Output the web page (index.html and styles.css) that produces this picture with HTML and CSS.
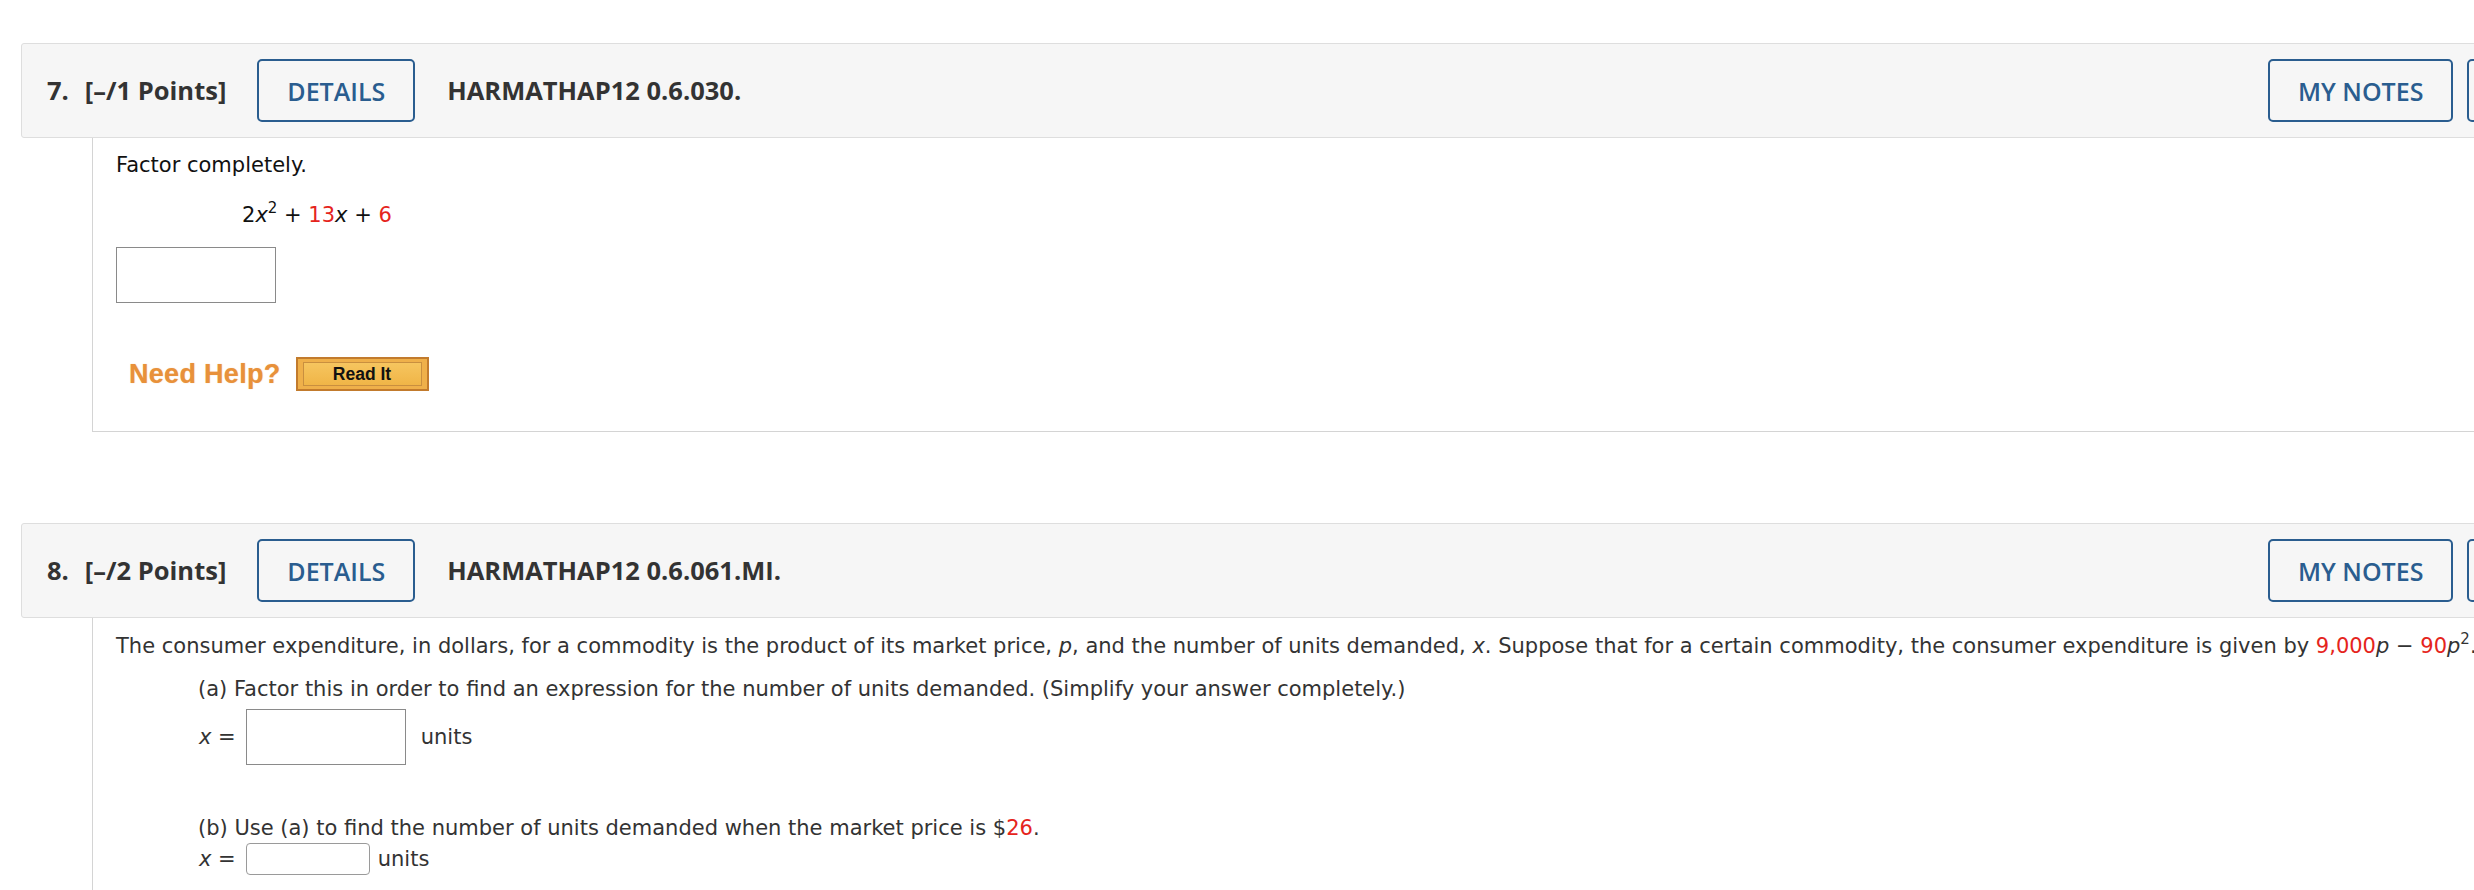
FILE: index.html
```html
<!DOCTYPE html>
<html lang="en">
<head>
<meta charset="utf-8">
<title>WebAssign</title>
<link rel="stylesheet" href="styles.css">
</head>
<body>
<div class="page">
  <section class="question">
    <div class="q-header">
      <div class="q-lead">
        <span class="q-num">7.</span>
        <span class="q-points">[–/1 Points]</span>
        <button class="btn btn-details">DETAILS</button>
        <span class="q-title">HARMATHAP12 0.6.030.</span>
      </div>
      <div class="actions">
        <button class="btn">MY NOTES</button>
        <button class="btn">ASK YOUR TEACHER</button>
        <button class="btn">PRACTICE ANOTHER</button>
      </div>
    </div>
    <div class="q-body q-body-first">
      <div class="prompt prompt-dark">Factor completely.</div>
      <div class="math">2<i>x</i><sup>2</sup> + <span class="red">13</span><i>x</i> + <span class="red">6</span></div>
      <input class="answer answer-big" type="text" aria-label="answer">
      <div class="help">
        <span class="help-label">Need Help?</span>
        <button class="read-it"><span class="read-it-inner">Read It</span></button>
      </div>
    </div>
  </section>

  <section class="question">
    <div class="q-header">
      <div class="q-lead">
        <span class="q-num">8.</span>
        <span class="q-points">[–/2 Points]</span>
        <button class="btn btn-details">DETAILS</button>
        <span class="q-title">HARMATHAP12 0.6.061.MI.</span>
      </div>
      <div class="actions">
        <button class="btn">MY NOTES</button>
        <button class="btn">ASK YOUR TEACHER</button>
        <button class="btn">PRACTICE ANOTHER</button>
      </div>
    </div>
    <div class="q-body q-body-second">
      <div class="prompt">The consumer expenditure, in dollars, for a commodity is the product of its market price, <i>p</i>, and the number of units demanded, <i>x</i>. Suppose that for a certain commodity, the consumer expenditure is given by <span class="red">9,000</span><i>p</i> &minus; <span class="red">90</span><i>p</i><sup>2</sup>.</div>
      <div class="part part-a">(a) Factor this in order to find an expression for the number of units demanded. (Simplify your answer completely.)</div>
      <div class="row row-a">
        <span class="var"><i>x</i> =</span>
        <input class="answer answer-big" type="text" aria-label="x">
        <span class="unit unit-a">units</span>
      </div>
      <div class="part part-b">(b) Use (a) to find the number of units demanded when the market price is $<span class="red">26</span>.</div>
      <div class="row row-b">
        <span class="var"><i>x</i> =</span>
        <input class="answer answer-small" type="text" aria-label="x">
        <span class="unit unit-b">units</span>
      </div>
      <div class="help help-second">
        <span class="help-label">Need Help?</span>
        <button class="read-it"><span class="read-it-inner">Read It</span></button>
      </div>
    </div>
  </section>
</div>
</body>
</html>
```
FILE: styles.css
```css
html, body {
  margin: 0;
  padding: 0;
  overflow: hidden;
  background: #ffffff;
}

body {
  font-family: "DejaVu Sans", Verdana, sans-serif;
  font-size: 21px;
  line-height: 24px;
  color: #333333;
}

.page {
  width: 3400px;
  padding: 43px 0 0 21px;
}

.question + .question {
  margin-top: 91px;
}

/* Header bar */
.q-header {
  display: flex;
  align-items: center;
  height: 93px;
  padding: 0 25px;
  background: #f6f6f6;
  border: 1px solid #dedede;
  border-radius: 3px;
  font-family: "Open Sans", "Liberation Sans", sans-serif;
  color: #333333;
}

.q-lead {
  flex: none;
  width: 2221px;
  display: flex;
  align-items: center;
}

.q-num,
.q-points,
.q-title {
  font-size: 25.5px;
  font-weight: 700;
  line-height: 1;
}

.q-num {
  margin-right: 16px;
}

.btn {
  font-family: "Open Sans", "Liberation Sans", sans-serif;
  font-size: 25px;
  font-weight: 600;
  color: #2a5d8f;
  background: transparent;
  border: 2px solid #2a5d8f;
  border-radius: 5px;
  height: 63px;
  padding: 0 28px;
  cursor: pointer;
  flex: none;
}

.btn-details {
  margin-left: 31px;
}

.q-title {
  margin-left: 32px;
}

.actions {
  display: flex;
  gap: 14px;
  flex: none;
}

/* Question body */
.q-body {
  margin-left: 71px;
  border-left: 1px solid #d4d4d4;
  border-bottom: 1px solid #d4d4d4;
  padding: 15px 0 40px 23px;
}

.q-body-second {
  padding-top: 16px;
  padding-bottom: 60px;
}

.prompt {
  white-space: nowrap;
}

.prompt-dark,
.math {
  color: #111111;
}

.prompt i,
.math i,
.var i {
  font-style: italic;
}

.red {
  color: #e5241c;
}

sup {
  font-size: 15px;
  line-height: 0;
  vertical-align: 9px;
}

.math {
  margin-top: 26px;
  padding-left: 126px;
}

.answer {
  box-sizing: border-box;
  margin: 0;
  background: #ffffff;
  font-family: inherit;
  font-size: 20px;
}

.answer-big {
  display: block;
  width: 160px;
  height: 56px;
  border: 1px solid #8a8a8a;
  border-radius: 0;
}

.q-body-first .answer-big {
  margin-top: 20px;
}

.answer-small {
  display: block;
  width: 124px;
  height: 32px;
  border: 1px solid #9a9a9a;
  border-radius: 4px;
}

/* Need help row */
.help {
  display: flex;
  align-items: center;
  margin-top: 54px;
  padding-left: 13px;
  gap: 15px;
}

.help-second {
  margin-top: 40px;
}

.help-label {
  font-family: "Liberation Sans", Arial, sans-serif;
  font-weight: 700;
  font-size: 27px;
  line-height: 30px;
  letter-spacing: 0.3px;
  color: #e8913a;
  text-shadow: 0 0 1px rgba(232, 145, 58, 0.6);
}

.read-it {
  box-sizing: border-box;
  width: 133px;
  height: 34px;
  margin: 0;
  padding: 3px 5px;
  background: #efb04a;
  border: 2px solid #c27b2d;
  cursor: pointer;
  flex: none;
}

.read-it-inner {
  box-sizing: border-box;
  display: flex;
  align-items: center;
  justify-content: center;
  width: 100%;
  height: 100%;
  background: linear-gradient(#f6c55f, #f0b547);
  border: 1px solid #c98f3f;
  font-family: "Liberation Sans", Arial, sans-serif;
  font-weight: 700;
  font-size: 17.5px;
  color: #111111;
}

/* Part rows */
.part {
  margin-left: 82px;
  white-space: nowrap;
}

.part-a {
  margin-top: 19px;
}

.part-b {
  margin-top: 51px;
}

.row {
  display: flex;
  align-items: center;
  margin-left: 83px;
}

.row-a {
  margin-top: 8px;
}

.row-b {
  margin-top: 3px;
}

.var {
  margin-right: 10px;
  white-space: nowrap;
}

.unit-a {
  margin-left: 15px;
}

.unit-b {
  margin-left: 8px;
}
```
